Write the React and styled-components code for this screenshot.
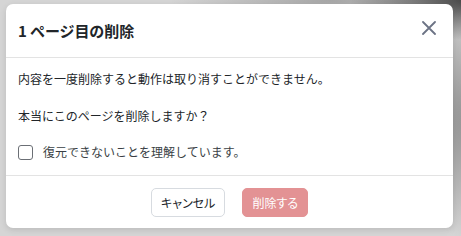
import React, { useState } from 'react'
import styled, { createGlobalStyle } from 'styled-components'

const Global = createGlobalStyle`
  html, body {
    margin: 0;
    padding: 0;
  }
  body {
    width: 461px;
    height: 236px;
    overflow: hidden;
    background:
      radial-gradient(ellipse 120px 40px at 470px 0px, rgba(40,40,40,0.85), rgba(40,40,40,0) 100%),
      radial-gradient(ellipse 80px 120px at 475px 120px, rgba(90,90,90,0.6), rgba(90,90,90,0) 100%),
      radial-gradient(ellipse 160px 30px at 330px 0px, rgba(120,120,120,0.5), rgba(120,120,120,0) 100%),
      #d5d5d5;
    font-family: "Noto Sans CJK JP", "Noto Sans", sans-serif;
    color: #212529;
  }
`

const Dialog = styled.div`
  margin: 4px 0 0 6px;
  width: 447px;
  height: 224px;
  background: #fff;
  border-radius: 7px;
  box-shadow: 0 2px 6px rgba(0, 0, 0, 0.12);
  display: flex;
  flex-direction: column;
  box-sizing: border-box;
`

const Header = styled.div`
  height: 53px;
  flex: none;
  display: flex;
  align-items: center;
  justify-content: space-between;
  padding: 0 15px 0 12px;
  border-bottom: 1px solid #e3e3e3;
`

const Title = styled.h2`
  margin: 0;
  font-size: 15px;
  font-weight: 700;
  letter-spacing: -0.1px;
`

const CloseBtn = styled.button`
  border: 0;
  background: none;
  padding: 0;
  width: 18px;
  height: 18px;
  display: flex;
  align-items: center;
  justify-content: center;
  cursor: pointer;
  margin-top: -5px;
`

const Body = styled.div`
  flex: 1;
  padding: 12px 12px 0;
  display: flex;
  flex-direction: column;
  gap: 19px;
`

const Text = styled.p`
  margin: 0;
  font-size: 12px;
  line-height: 18px;
`

const CheckRow = styled.label`
  display: flex;
  align-items: center;
  gap: 10px;
  font-size: 12px;
  line-height: 18px;
  color: #3a3f45;
  margin-top: -1px;
`

const Box = styled.span`
  width: 15px;
  height: 15px;
  box-sizing: border-box;
  border: 1px solid ${p => (p.$checked ? '#0d6efd' : '#6b6f75')};
  background: ${p => (p.$checked ? '#0d6efd' : '#fff')};
  border-radius: 3px;
  flex: none;
`

const Footer = styled.div`
  height: 53px;
  flex: none;
  border-top: 1px solid #e3e3e3;
  display: flex;
  align-items: center;
  justify-content: center;
  gap: 17px;
  box-sizing: border-box;
`

const Button = styled.button`
  height: 29px;
  padding: 0 9px;
  border-radius: 5px;
  font-family: inherit;
  font-size: 12px;
  font-feature-settings: "palt";
  border: 1px solid ${p => (p.$danger ? '#e39294' : '#d7dbe0')};
  background: ${p => (p.$danger ? '#e39294' : '#fff')};
  color: ${p => (p.$danger ? '#ffffff' : '#212529')};
  cursor: ${p => (p.$off ? 'default' : 'pointer')};
`

export default function App() {
  const [checked, setChecked] = useState(false)
  return (
    <>
      <Global />
      <Dialog>
        <Header>
          <Title>1 ページ目の削除</Title>
          <CloseBtn aria-label="閉じる">
            <svg width="14" height="14" viewBox="0 0 14 14">
              <path d="M1 1L13 13M13 1L1 13" stroke="#6c7385" strokeWidth="1.8" strokeLinecap="round" />
            </svg>
          </CloseBtn>
        </Header>
        <Body>
          <Text>内容を一度削除すると動作は取り消すことができません。</Text>
          <Text>本当にこのページを削除しますか？</Text>
          <CheckRow onClick={() => setChecked(!checked)}>
            <Box $checked={checked} />
            復元できないことを理解しています。
          </CheckRow>
        </Body>
        <Footer>
          <Button>キャンセル</Button>
          <Button $danger $off={!checked}>削除する</Button>
        </Footer>
      </Dialog>
    </>
  )
}
